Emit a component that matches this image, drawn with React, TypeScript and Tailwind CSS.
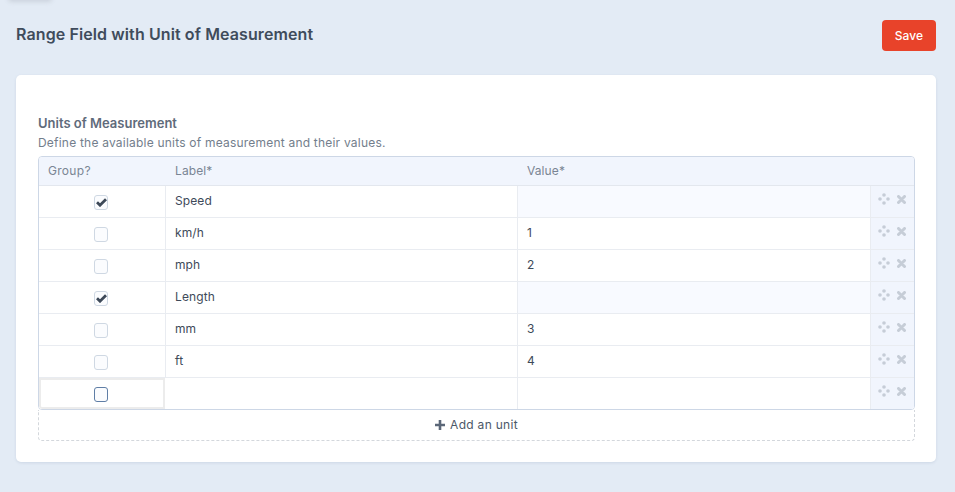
const rows = [
  { group: true, label: "Speed", value: "" },
  { group: false, label: "km/h", value: "1" },
  { group: false, label: "mph", value: "2" },
  { group: true, label: "Length", value: "" },
  { group: false, label: "mm", value: "3" },
  { group: false, label: "ft", value: "4" },
];

function Move() {
  return (
    <svg width="12" height="12" viewBox="0 0 12 12" fill="#c6cdd7">
      <circle cx="6" cy="2" r="1.8" />
      <circle cx="2" cy="6" r="1.8" />
      <circle cx="10" cy="6" r="1.8" />
      <circle cx="6" cy="10" r="1.8" />
    </svg>
  );
}

function Cross() {
  return (
    <svg width="9" height="9" viewBox="0 0 9 9" stroke="#c6cdd7" strokeWidth="3" strokeLinecap="round">
      <path d="M1.5 1.5 7.5 7.5M7.5 1.5 1.5 7.5" />
    </svg>
  );
}

function Check({ checked, focus }: { checked: boolean; focus?: boolean }) {
  return (
    <span
      className={`flex h-[15px] w-[14px] items-center justify-center rounded-[3px] border bg-[#fbfcfe] ${
        focus ? "border-[#5f7ea6]" : "border-[#cfd8e3]"
      }`}
    >
      {checked && (
        <svg width="11" height="9" viewBox="0 0 11 9" fill="none" stroke="#3e4a59" strokeWidth="2.8">
          <path d="M1 4.3 4 7.2 10 1.2" />
        </svg>
      )}
    </span>
  );
}

function Actions() {
  return (
    <div className="flex flex-1 items-center gap-[7px] bg-[#f1f5fd] pb-[5px] pl-[7px]">
      <Move />
      <Cross />
    </div>
  );
}

export default function App() {
  return (
    <div
      className="relative min-h-[492px] overflow-hidden bg-[#e3ebf5] pt-5 pr-[19px] pl-4 text-[#3e4a59]"
      style={{ fontFamily: "Inter, 'Liberation Sans', sans-serif" }}
    >
      <div className="absolute -top-[6px] left-[8px] h-2 w-[44px] rounded-md bg-[#ccd3dd] blur-[2px]" />
      <div className="mb-[25px] flex h-[30px] items-start justify-between">
        <h1 className="mt-1 text-[16px] leading-5 font-semibold tracking-[0.1px] text-[#3f4c5c]">
          Range Field with Unit of Measurement
        </h1>
        <button className="h-[31px] w-[54px] rounded-[4px] bg-[#e8432a] text-[12px] font-medium tracking-[0.1px] text-white">
          Save
        </button>
      </div>

      <div className="h-[387px] rounded-[5px] bg-white pt-[39px] pr-[21px] pl-[22px] shadow-[0_1px_3px_rgba(120,140,170,0.2)]">
        <div className="text-[13px] leading-[18px] font-semibold text-[#5f6b7b]">Units of Measurement</div>
        <div className="mt-[2px] mb-[4px] text-[12px] leading-[18px] tracking-[0.21px] text-[#737e8c]">
          Define the available units of measurement and their values.
        </div>

        <div className="overflow-hidden rounded-[4px] border border-[#cdd7e6] text-[12px] tracking-[0.1px]">
          <div className="grid h-[29px] grid-cols-[126px_352px_353px_1fr] items-center border-b border-[#e3e7ee] bg-[#f1f5fd] text-[#7a8594]">
            <div className="pl-[9px] tracking-[0.3px]">Group?</div>
            <div className="pl-[10px]">Label*</div>
            <div className="pl-[10px]">Value*</div>
            <div />
          </div>
          {rows.map((r) => (
            <div key={r.label} className="grid h-8 grid-cols-[126px_352px_353px_1fr] border-b border-[#e9ecf1] bg-white">
              <div className="flex items-center justify-center pr-[2px]">
                <div className="pt-[2px]">
                  <Check checked={r.group} />
                </div>
              </div>
              <div className="flex items-center border-l border-[#e9ecf1] pb-[1px] pl-[9px]">{r.label}</div>
              <div className={`flex items-center border-l border-[#e9ecf1] pb-[1px] pl-[9px] ${r.group ? "bg-[#f8faff]" : ""}`}>
                {r.value}
              </div>
              <div className="flex border-l border-[#e9ecf1]">
                <Actions />
              </div>
            </div>
          ))}
          <div className="grid h-[31px] grid-cols-[126px_352px_353px_1fr] bg-white">
            <div className="flex items-center justify-center rounded-bl-[3px] border-2 border-[#ececec] pr-[2px]">
              <div className="pt-[2px]">
                <Check checked={false} focus />
              </div>
            </div>
            <div />
            <div className="border-l border-[#e9ecf1]" />
            <div className="flex border-l border-[#e9ecf1]">
              <Actions />
            </div>
          </div>
        </div>

        <div className="flex h-[31px] items-center justify-center gap-[5px] rounded-b-[4px] border border-t-0 border-dashed border-[#d3d7dc] text-[12px] tracking-[0.3px] text-[#4c5868]">
          <svg width="10" height="10" viewBox="0 0 10 10" stroke="#5b6778" strokeWidth="2.6">
            <path d="M5 0v10M0 5h10" />
          </svg>
          Add an unit
        </div>
      </div>
    </div>
  );
}
